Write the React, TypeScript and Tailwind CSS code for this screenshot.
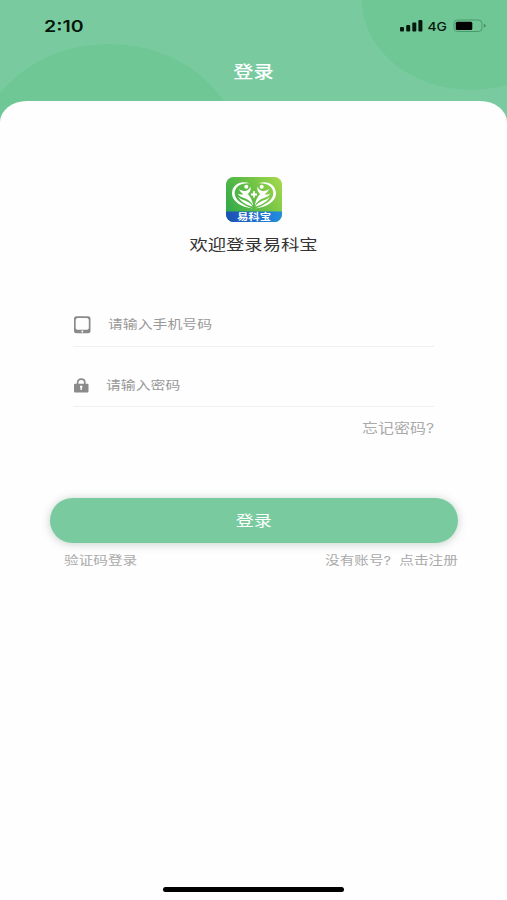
import type { ReactNode } from 'react';

interface WideTextProps {
  children: ReactNode;
  className?: string;
}

// Text set slightly wider than its natural shape
function WideText({ children, className = '' }: WideTextProps) {
  return (
    <span className={`inline-block scale-x-[1.22] whitespace-nowrap ${className}`}>{children}</span>
  );
}

function HeaderBackground() {
  return (
    <svg className="absolute left-0 top-0" width="507" height="130" viewBox="0 0 507 130" fill="none">
      <ellipse cx="109" cy="152" rx="130" ry="108" fill="#70c796" />
      <ellipse cx="471" cy="0" rx="109" ry="90" fill="#70c796" />
    </svg>
  );
}

function StatusBar() {
  return (
    <div className="relative flex h-[52px] items-center justify-between pl-[44px] pr-[20px] text-[#06170d]">
      <WideText className="origin-left text-[16px] font-semibold">2:10</WideText>
      <svg width="88" height="16" viewBox="0 0 88 16" fill="none">
        <rect x="1" y="9" width="4" height="4.5" rx="1" fill="#06170d" />
        <rect x="7.2" y="7" width="4" height="6.5" rx="1" fill="#06170d" />
        <rect x="13.3" y="4.5" width="4" height="9" rx="1" fill="#06170d" />
        <rect x="19.4" y="2" width="4" height="11.5" rx="1" fill="#06170d" />
        <text
          x="28.5"
          y="12.6"
          textLength="19.5"
          lengthAdjust="spacingAndGlyphs"
          className="text-[12px] font-medium"
          fill="#06170d"
        >
          4G
        </text>
        <rect x="55" y="2" width="28" height="11.5" rx="3.5" stroke="#4a9a6c" />
        <rect x="56.8" y="3.7" width="16.5" height="8.2" rx="1.5" fill="#000" />
        <path d="M84.8 6v3.6c1.4-.4 2-1 2-1.8s-.6-1.4-2-1.8z" fill="#4a8a66" />
      </svg>
    </div>
  );
}

// One half of the heart: outer ring, head and raised arms
function HeartHalf() {
  return (
    <>
      <path d="M24 6.500C15 2.800 6 7.500 6 16.500 6 24.500 15 30 27 31.500 17 28 9 23.500 8.700 16.500 8.500 9.500 15.500 5.500 24 6.500z" />
      <circle cx="20.300" cy="9.800" r="2" />
      <path d="M13 11.800c1.800 1.900 4 2.200 6.500 2.200 2.300-.5 4-1.800 5-4.500.8 3.500-.8 5.800-2.600 7.500 2.300 2.600 4.600 6.500 5.300 11.500-2.700-4.300-5.700-6.700-9.200-7.500-2.600-.8-4.800-2-6.300-4.200 2 .9 3.800 1 5.800.4-2-1.100-3.800-2.900-4.500-5.400z" />
      <path d="M12 19.500c2.500 3.200 7 3.800 10 5.500 2 1.200 3.800 2.800 4.700 4.500-6-1.300-12-4.500-14.700-10z" />
    </>
  );
}

function Logo() {
  return (
    <svg width="56" height="45" viewBox="0 0 56 45" fill="none">
      <defs>
        <linearGradient id="leaf" x1="0" y1="34" x2="56" y2="0" gradientUnits="userSpaceOnUse">
          <stop stopColor="#2fa94a" />
          <stop offset="0.5" stopColor="#68c045" />
          <stop offset="1" stopColor="#a9da4c" />
        </linearGradient>
        <linearGradient id="band" x1="0" y1="0" x2="56" y2="0" gradientUnits="userSpaceOnUse">
          <stop stopColor="#1c4fb4" />
          <stop offset="1" stopColor="#218de0" />
        </linearGradient>
        <clipPath id="badge">
          <rect width="56" height="45" rx="7.5" />
        </clipPath>
      </defs>
      <g clipPath="url(#badge)">
        <rect width="56" height="45" fill="url(#leaf)" />
        <rect y="34.5" width="56" height="11" fill="url(#band)" />
      </g>
      <g fill="#fff">
        <HeartHalf />
        <g transform="translate(56 0) scale(-1 1)">
          <HeartHalf />
        </g>
      </g>
      <path d="M28 14.300v6.200M25 17.400h6" stroke="#fff" strokeWidth="2" />
      <text
        x="11"
        y="43"
        textLength="34"
        lengthAdjust="spacingAndGlyphs"
        className="text-[9px] font-bold"
        fill="#fff"
      >
        易科宝
      </text>
    </svg>
  );
}

function PhoneIcon() {
  return (
    <svg width="18" height="18" viewBox="0 0 18 18">
      <path
        fillRule="evenodd"
        clipRule="evenodd"
        d="M3.500 .2h11.500a2.500 2.500 0 0 1 2.500 2.500v12a2.500 2.500 0 0 1-2.500 2.500H3.500A2.500 2.500 0 0 1 1 14.700V2.700A2.500 2.500 0 0 1 3.500 .2zM4.200 2 2.700 3.500v9L4 13.700h10.500l1.300-1.200v-9L14.300 2zM9.300 14.400a1 1 0 1 0 0 2 1 1 0 0 0 0-2z"
        fill="#8a8a8a"
      />
    </svg>
  );
}

function LockIcon() {
  return (
    <svg width="16" height="16" viewBox="0 0 16 16" fill="none">
      <path d="M4.600 7V4.500C4.600 2.500 6 1.200 8.200 1.200s3.600 1.300 3.600 3.300V7" stroke="#8a8a8a" strokeWidth="1.700" />
      <rect x="1" y="5.700" width="14.500" height="8.800" rx="1" fill="#8a8a8a" />
      <path d="M8.200 7.500a1.300 1.300 0 0 0-.7 2.400V12h1.400V9.900A1.300 1.300 0 0 0 8.200 7.500z" fill="#fff" />
    </svg>
  );
}

export default function App() {
  return (
    <div className="relative flex h-[900px] w-[507px] flex-col overflow-hidden bg-[#79cb9f] font-['Inter','Noto_Sans_CJK_SC',sans-serif]">
      <HeaderBackground />
      <StatusBar />
      <div className="relative flex h-[49px] justify-center pt-[8px] text-[16.500px] leading-6 font-medium text-white">
        <WideText>登录</WideText>
      </div>

      <main className="relative flex flex-1 flex-col rounded-[27px_27px_0_0/21px_21px_0_0] bg-[#fefefe] pt-[76px]">
        <div className="flex flex-col items-center">
          <Logo />
          <h1 className="mt-[11px] text-[15px] leading-6 text-[#333]">
            <WideText>欢迎登录易科宝</WideText>
          </h1>
        </div>

        <form className="mx-[73px] mt-[47px] text-[12.200px] text-[#999]">
          <div className="flex h-[43px] items-center border-b border-[#f0f0f0]">
            <PhoneIcon />
            <WideText className="ml-[17px] origin-left">请输入手机号码</WideText>
          </div>
          <div className="flex h-[60px] items-center border-b border-[#f0f0f0] pt-[19px]">
            <LockIcon />
            <WideText className="ml-[17px] origin-left">请输入密码</WideText>
          </div>
          <div className="mt-[11px] flex justify-end text-[13.100px] leading-5 text-[#aaa]">
            <WideText className="origin-right">忘记密码?</WideText>
          </div>
        </form>

        <button
          type="button"
          className="mx-[49.500px] mt-[60px] h-[45px] rounded-full bg-[#79cb9f] pt-px text-[14.800px] text-white shadow-[0_1px_10px_rgba(50,90,65,0.28)]"
        >
          <WideText>登录</WideText>
        </button>

        <div className="mt-[8px] flex justify-between pl-[64px] pr-[49px] text-[12px] leading-5 text-[#aaa]">
          <WideText className="origin-left">验证码登录</WideText>
          <WideText className="origin-right">没有账号?&nbsp; 点击注册</WideText>
        </div>

        <div className="mx-auto mt-auto mb-[8px] h-[5px] w-[181px] rounded-full bg-black" />
      </main>
    </div>
  );
}
